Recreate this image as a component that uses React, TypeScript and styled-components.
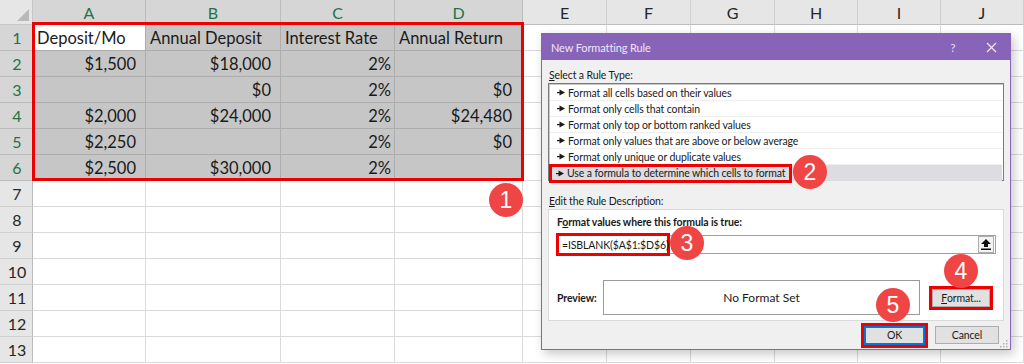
import styled, { createGlobalStyle } from 'styled-components';

const GlobalStyle = createGlobalStyle`
	html, body {
		margin: 0;
		padding: 0;
		background: #ffffff;
		overflow: hidden;
	}
	body {
		width: 1024px;
		height: 364px;
	}
`;

const colWidths = [33, 113, 135, 114, 128, 84, 84, 84, 83, 83, 83];
const letters = ['A', 'B', 'C', 'D', 'E', 'F', 'G', 'H', 'I', 'J'];

type CellData = { text: string; align?: 'left' | 'right'; pad?: number };

const data: CellData[][] = [
	[{ text: 'Deposit/Mo' }, { text: 'Annual Deposit' }, { text: 'Interest Rate' }, { text: 'Annual Return' }],
	[{ text: '$1,500', align: 'right', pad: 9 }, { text: '$18,000', align: 'right', pad: 9 }, { text: '2%', align: 'right', pad: 3 }, { text: '' }],
	[{ text: '' }, { text: '$0', align: 'right', pad: 9 }, { text: '2%', align: 'right', pad: 3 }, { text: '$0', align: 'right', pad: 10 }],
	[{ text: '$2,000', align: 'right', pad: 9 }, { text: '$24,000', align: 'right', pad: 9 }, { text: '2%', align: 'right', pad: 3 }, { text: '$24,480', align: 'right', pad: 10 }],
	[{ text: '$2,250', align: 'right', pad: 9 }, { text: '' }, { text: '2%', align: 'right', pad: 3 }, { text: '$0', align: 'right', pad: 10 }],
	[{ text: '$2,500', align: 'right', pad: 9 }, { text: '$30,000', align: 'right', pad: 9 }, { text: '2%', align: 'right', pad: 3 }, { text: '' }],
];

const rules = [
	'Format all cells based on their values',
	'Format only cells that contain',
	'Format only top or bottom ranked values',
	'Format only values that are above or below average',
	'Format only unique or duplicate values',
	'Use a formula to determine which cells to format',
];

const Page = styled.div`
	position: relative;
	width: 1024px;
	height: 364px;
	overflow: hidden;
`;

const Sheet = styled.div`
	display: grid;
	grid-template-columns: ${colWidths.map((w) => `${w}px`).join(' ')};
	grid-template-rows: 25px;
	grid-auto-rows: 26px;
	font-family: Lato, 'Liberation Sans', sans-serif;
`;

const Corner = styled.div`
	position: relative;
	background: #e6e6e6;
	border-right: 1px solid #c6c6c6;
	border-bottom: 1px solid #c6c6c6;
	box-sizing: border-box;
	&::after {
		content: '';
		position: absolute;
		right: 3px;
		bottom: 3px;
		border-style: solid;
		border-width: 0 0 12px 12px;
		border-color: transparent transparent #b9b9b9 transparent;
	}
`;

const ColHead = styled.div<{ $sel: boolean }>`
	display: flex;
	align-items: center;
	justify-content: center;
	box-sizing: border-box;
	background: ${(p) => (p.$sel ? '#d6d6d6' : '#e6e6e6')};
	color: ${(p) => (p.$sel ? '#217346' : '#262626')};
	border-right: 1px solid ${(p) => (p.$sel ? '#bcbcbc' : '#d0d0d0')};
	border-bottom: 1px solid #bdbdbd;
	font-size: 16px;
	padding-top: 1px;
`;

const RowHead = styled.div<{ $sel: boolean }>`
	display: flex;
	align-items: center;
	justify-content: center;
	box-sizing: border-box;
	background: ${(p) => (p.$sel ? '#d6d6d6' : '#e6e6e6')};
	color: ${(p) => (p.$sel ? '#217346' : '#262626')};
	border-right: 1px solid #bdbdbd;
	border-bottom: 1px solid ${(p) => (p.$sel ? '#bcbcbc' : '#d0d0d0')};
	font-size: 16px;
	padding-left: 2px;
`;

const Cell = styled.div<{ $fill: 'none' | 'sel' | 'active'; $align: 'left' | 'right'; $pad: number }>`
	display: flex;
	align-items: center;
	justify-content: ${(p) => (p.$align === 'right' ? 'flex-end' : 'flex-start')};
	box-sizing: border-box;
	padding: 1px ${(p) => (p.$align === 'right' ? p.$pad : 0)}px 0 ${(p) => (p.$align === 'left' ? 4 : 0)}px;
	background: ${(p) => (p.$fill === 'sel' ? '#c6c6c6' : '#ffffff')};
	border-right: 1px solid ${(p) => (p.$fill === 'none' ? '#dadada' : '#adadad')};
	border-bottom: 1px solid ${(p) => (p.$fill === 'none' ? '#dadada' : '#adadad')};
	color: #1a1a1a;
	font-size: 16.5px;
	white-space: nowrap;
	overflow: visible;
`;

const RangeMark = styled.div`
	position: absolute;
	left: 32px;
	top: 22px;
	width: 492px;
	height: 159px;
	box-sizing: border-box;
	border: 3px solid #ee0000;
	pointer-events: none;
`;

const Badge = styled.div<{ $x: number; $y: number }>`
	position: absolute;
	left: ${(p) => p.$x - 17}px;
	top: ${(p) => p.$y - 17}px;
	width: 34px;
	height: 34px;
	border-radius: 50%;
	background: #f04545;
	color: #ffffff;
	display: flex;
	align-items: center;
	justify-content: center;
	font-family: 'Liberation Sans', Arial, sans-serif;
	font-size: 23px;
	line-height: 1;
	z-index: 5;
`;

const Dialog = styled.div`
	position: absolute;
	left: 541px;
	top: 33px;
	width: 470px;
	height: 317px;
	box-sizing: border-box;
	border: 1px solid #8764b8;
	background: #f0f0f0;
	box-shadow: 3px 4px 10px rgba(0, 0, 0, 0.22);
	display: flex;
	flex-direction: column;
	font-family: Lato, 'Open Sans', sans-serif;
	font-size: 10.5px;
	letter-spacing: -0.12px;
	color: #1a1a1a;
`;

const TitleBar = styled.div`
	height: 26px;
	flex-shrink: 0;
	background: #8764b8;
	color: #eee6f8;
	display: flex;
	align-items: center;
	padding-left: 9px;
	font-size: 11px;
`;

const TitleText = styled.span`
	flex: 1;
`;

const TitleButton = styled.span`
	width: 38px;
	display: flex;
	justify-content: center;
	align-items: center;
	color: #e6ddf2;
	font-size: 12px;
`;

const Body = styled.div`
	flex: 1;
	display: flex;
	flex-direction: column;
	padding: 0 6px 0 6px;
`;

const SectionLabel = styled.div<{ $top: number }>`
	height: 16px;
	line-height: 16px;
	margin-top: ${(p) => p.$top}px;
	padding-left: 1px;
	& u {
		text-decoration: underline;
	}
`;

const RuleList = styled.div`
	height: 98px;
	box-sizing: border-box;
	border: 1px solid #7a7a7a;
	box-shadow: inset 1px 1px 0 #c9c9c9;
	background: #ffffff;
	padding: 1px 1px 0 1px;
	display: flex;
	flex-direction: column;
`;

const RuleItem = styled.div<{ $active: boolean }>`
	height: 16px;
	box-sizing: border-box;
	display: flex;
	align-items: center;
	border-bottom: 1px solid #efefef;
	background: ${(p) => (p.$active ? '#dcdce1' : 'transparent')};
	&:last-child {
		border-bottom: none;
	}
`;

const RuleText = styled.span<{ $marked: boolean }>`
	display: flex;
	align-items: center;
	gap: 3px;
	height: ${(p) => (p.$marked ? '19px' : '16px')};
	box-sizing: border-box;
	padding: 0 3px 0 ${(p) => (p.$marked ? 4 : 7)}px;
	margin-left: ${(p) => (p.$marked ? -1 : 0)}px;
	border: ${(p) => (p.$marked ? '3px solid #ee0000' : 'none')};
	white-space: nowrap;
`;

const Group = styled.div`
	height: 112px;
	box-sizing: border-box;
	border: 1px solid #d9d9d9;
	background: #ffffff;
	padding: 4px 7px 0 8px;
	display: flex;
	flex-direction: column;
`;

const BoldLabel = styled.div<{ $w?: number }>`
	font-weight: 700;
	height: 16px;
	line-height: 16px;
	flex-shrink: 0;
	width: ${(p) => (p.$w ? `${p.$w}px` : 'auto')};
	& u {
		text-decoration: underline;
	}
`;

const FormulaField = styled.div`
	margin-top: 5px;
	height: 19px;
	box-sizing: border-box;
	border: 1px solid #a0a0a0;
	display: flex;
	align-items: center;
	justify-content: space-between;
`;

const FormulaText = styled.span`
	width: 114px;
	height: 23px;
	margin-left: -2px;
	box-sizing: border-box;
	border: 3px solid #ee0000;
	display: flex;
	align-items: center;
	padding: 0 0 0 3px;
	background: #ffffff;
	white-space: nowrap;
`;

const CollapseButton = styled.span`
	width: 16px;
	height: 17px;
	margin-right: 1px;
	box-sizing: border-box;
	border: 1px solid #adadad;
	background: #f3f3f3;
	display: flex;
	align-items: center;
	justify-content: center;
`;

const PreviewRow = styled.div`
	margin-top: 26px;
	display: flex;
	align-items: center;
`;

const PreviewBox = styled.div`
	width: 317px;
	height: 35px;
	box-sizing: border-box;
	border: 1px solid #9a9a9a;
	display: flex;
	align-items: center;
	justify-content: center;
	font-size: 12px;
	letter-spacing: 0;
`;

const RedFrame = styled.div<{ $left: number }>`
	margin-left: ${(p) => p.$left}px;
	box-sizing: border-box;
	border: 3px solid #ee0000;
	padding: 0;
	display: flex;
`;

const PushButton = styled.div<{ $w: number; $focus?: boolean }>`
	width: ${(p) => p.$w}px;
	height: ${(p) => (p.$focus ? 19 : 18)}px;
	box-sizing: border-box;
	background: #e1e1e1;
	border: ${(p) => (p.$focus ? '2px solid #0078d7' : '1px solid #adadad')};
	display: flex;
	align-items: center;
	justify-content: center;
	font-size: 10.5px;
	& u {
		text-decoration: underline;
	}
`;

const Footer = styled.div`
	flex: 1;
	display: flex;
	align-items: center;
	justify-content: flex-end;
	gap: 7px;
	padding-right: 5px;
	position: relative;
`;

const Grip = styled.svg`
	position: absolute;
	right: -4px;
	bottom: 1px;
`;

function RuleArrow() {
	return (
		<svg width="8" height="7" viewBox="0 0 8 7">
			<rect x="0" y="3" width="4" height="1.2" fill="#1a1a1a" />
			<polygon points="2.5,0.5 8,3.5 2.5,6.5" fill="#1a1a1a" />
		</svg>
	);
}

function App() {
	const selCols = 4;
	const selRows = 6;

	const rowsOut = [];
	rowsOut.push(<Corner key="corner" />);
	letters.forEach((l, i) => rowsOut.push(<ColHead key={`h${l}`} $sel={i < selCols}>{l}</ColHead>));

	for (let r = 1; r <= 13; r++) {
		rowsOut.push(<RowHead key={`r${r}`} $sel={r <= selRows}>{r}</RowHead>);
		for (let c = 0; c < letters.length; c++) {
			const inSel = r <= selRows && c < selCols;
			const d = inSel ? data[r - 1][c] : { text: '' };
			const fill = !inSel ? 'none' : r === 1 && c === 0 ? 'active' : 'sel';
			rowsOut.push(
				<Cell key={`c${r}-${c}`} $fill={fill} $align={d.align ?? 'left'} $pad={d.pad ?? 0}>
					{d.text}
				</Cell>
			);
		}
	}

	return (
		<Page>
			<GlobalStyle />
			<Sheet>{rowsOut}</Sheet>
			<RangeMark />

			<Dialog>
				<TitleBar>
					<TitleText>New Formatting Rule</TitleText>
					<TitleButton>?</TitleButton>
					<TitleButton>
						<svg width="11" height="11" viewBox="0 0 11 11">
							<path d="M1 1 L10 10 M10 1 L1 10" stroke="#efe8f8" strokeWidth="1.2" />
						</svg>
					</TitleButton>
				</TitleBar>
				<Body>
					<SectionLabel $top={7}><u>S</u>elect a Rule Type:</SectionLabel>
					<RuleList>
						{rules.map((rule, i) => {
							const active = i === rules.length - 1;
							return (
								<RuleItem key={rule} $active={active}>
									<RuleText $marked={active}>
										<RuleArrow />
										{rule}
									</RuleText>
								</RuleItem>
							);
						})}
					</RuleList>
					<SectionLabel $top={12}><u>E</u>dit the Rule Description:</SectionLabel>
					<Group>
						<BoldLabel>F<u>o</u>rmat values where this formula is true:</BoldLabel>
						<FormulaField>
							<FormulaText>=ISBLANK($A$1:$D$6)</FormulaText>
							<CollapseButton>
								<svg width="10" height="11" viewBox="0 0 10 11">
									<polygon points="5,0 10,5 7,5 7,8 3,8 3,5 0,5" fill="#111" />
									<rect x="0" y="9.5" width="10" height="1.5" fill="#111" />
								</svg>
							</CollapseButton>
						</FormulaField>
						<PreviewRow>
							<BoldLabel $w={46}>Preview:</BoldLabel>
							<PreviewBox>No Format Set</PreviewBox>
							<RedFrame $left={9}>
								<PushButton $w={58}><u>F</u>ormat...</PushButton>
							</RedFrame>
						</PreviewRow>
					</Group>
					<Footer>
						<RedFrame $left={0}>
							<PushButton $w={61} $focus>OK</PushButton>
						</RedFrame>
						<PushButton $w={64}>Cancel</PushButton>
						<Grip width="10" height="10" viewBox="0 0 10 10">
							<rect x="8" y="2" width="1.5" height="1.5" fill="#b0b0b0" />
							<rect x="5" y="5" width="1.5" height="1.5" fill="#b0b0b0" />
							<rect x="8" y="5" width="1.5" height="1.5" fill="#b0b0b0" />
							<rect x="2" y="8" width="1.5" height="1.5" fill="#b0b0b0" />
							<rect x="5" y="8" width="1.5" height="1.5" fill="#b0b0b0" />
							<rect x="8" y="8" width="1.5" height="1.5" fill="#b0b0b0" />
						</Grip>
					</Footer>
				</Body>
			</Dialog>

			<Badge $x={506} $y={200}>1</Badge>
			<Badge $x={810} $y={172}>2</Badge>
			<Badge $x={687} $y={243}>3</Badge>
			<Badge $x={961} $y={271}>4</Badge>
			<Badge $x={893} $y={305}>5</Badge>
		</Page>
	);
}

export default App;
